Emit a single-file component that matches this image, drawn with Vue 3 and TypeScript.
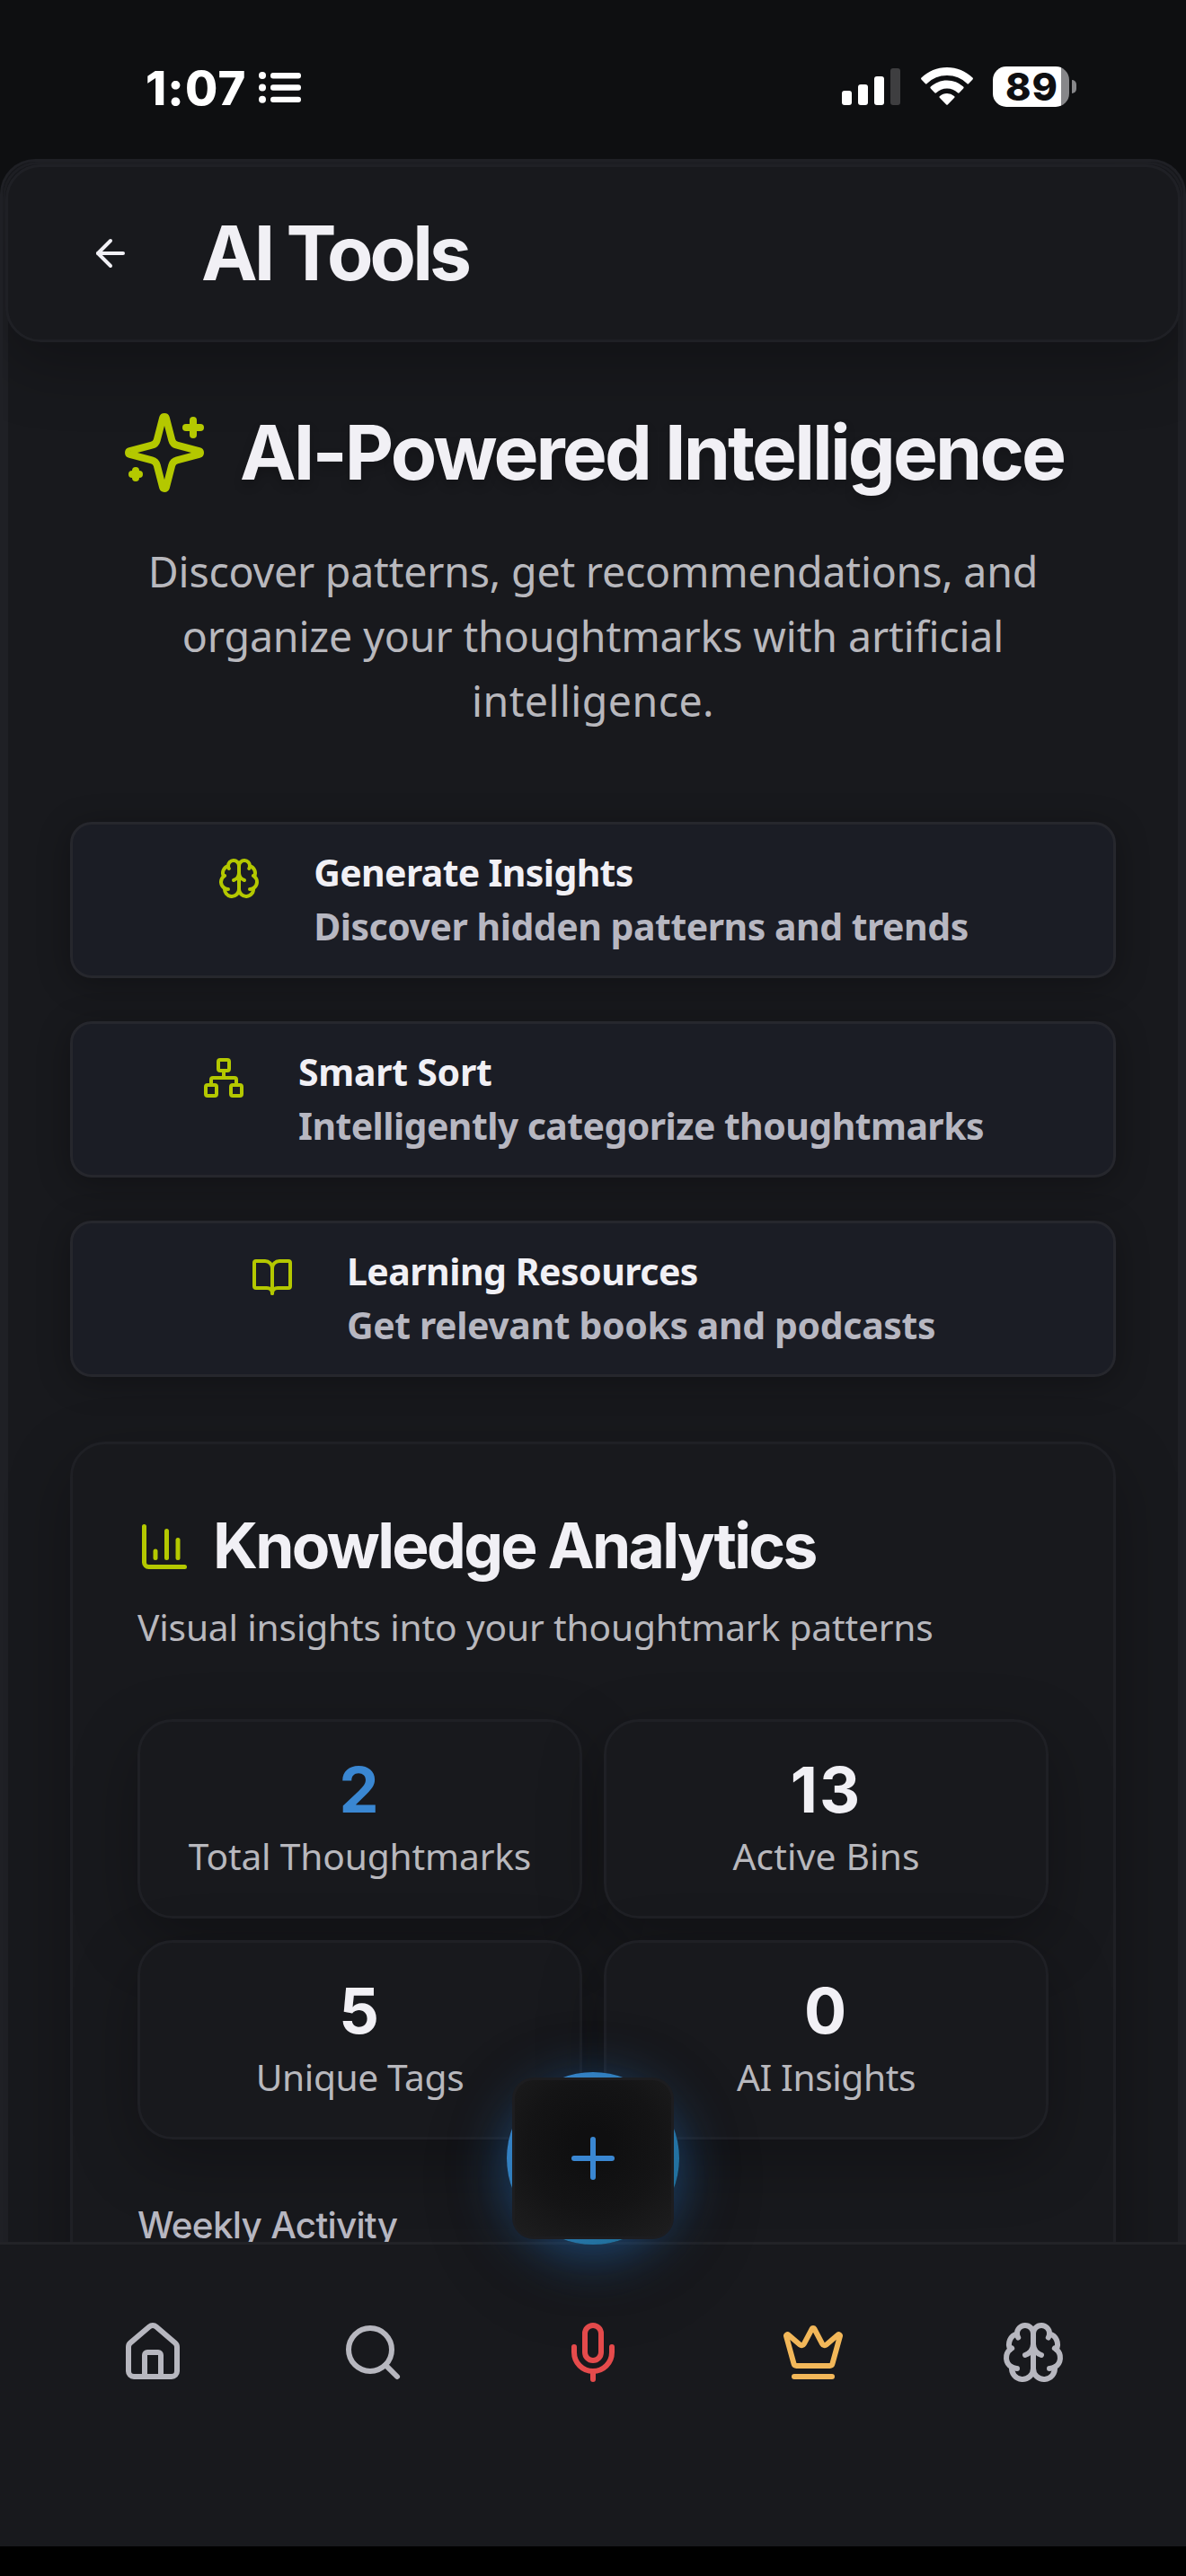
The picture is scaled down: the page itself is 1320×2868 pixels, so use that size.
<script setup lang="ts">
interface Action { id: string; title: string; desc: string; titleTracking: number; descTracking: number }
interface Stat { value: string; label: string; accent?: boolean; tracking: number }

const icons: Record<string, string> = {
  back: '<path d="m12 19-7-7 7-7"/><path d="M19 12H5"/>',
  sparkles:
    '<path d="M9.937 15.5A2 2 0 0 0 8.5 14.063l-6.135-1.582a.5.5 0 0 1 0-.962L8.5 9.936A2 2 0 0 0 9.937 8.5l1.582-6.135a.5.5 0 0 1 .963 0L14.063 8.5A2 2 0 0 0 15.5 9.937l6.135 1.581a.5.5 0 0 1 0 .964L15.5 14.063a2 2 0 0 0-1.437 1.437l-1.582 6.135a.5.5 0 0 1-.963 0z"/><path d="M20 3v4"/><path d="M22 5h-4"/><path d="M4 17v2"/><path d="M5 18H3"/>',
  brain:
    '<path d="M12 5a3 3 0 1 0-5.997.125 4 4 0 0 0-2.526 5.77 4 4 0 0 0 .556 6.588A4 4 0 1 0 12 18Z"/><path d="M12 5a3 3 0 1 1 5.997.125 4 4 0 0 1 2.526 5.77 4 4 0 0 1-.556 6.588A4 4 0 1 1 12 18Z"/><path d="M15 13a4.5 4.5 0 0 1-3-4 4.5 4.5 0 0 1-3 4"/><path d="M17.599 6.5a3 3 0 0 0 .399-1.375"/><path d="M6.003 5.125A3 3 0 0 0 6.401 6.5"/><path d="M3.477 10.896a4 4 0 0 1 .585-.396"/><path d="M19.938 10.5a4 4 0 0 1 .585.396"/><path d="M6 18a4 4 0 0 1-1.967-.516"/><path d="M19.967 17.484A4 4 0 0 1 18 18"/>',
  network:
    '<rect x="16" y="16" width="6" height="6" rx="1"/><rect x="2" y="16" width="6" height="6" rx="1"/><rect x="9" y="2" width="6" height="6" rx="1"/><path d="M5 16v-3a1 1 0 0 1 1-1h12a1 1 0 0 1 1 1v3"/><path d="M12 12V8"/>',
  book:
    '<path d="M12 7v14"/><path d="M3 18a1 1 0 0 1-1-1V4a1 1 0 0 1 1-1h5a4 4 0 0 1 4 4 4 4 0 0 1 4-4h5a1 1 0 0 1 1 1v13a1 1 0 0 1-1 1h-6a3 3 0 0 0-3 3 3 3 0 0 0-3-3z"/>',
  chart: '<path d="M3 3v16a2 2 0 0 0 2 2h16"/><path d="M18 17V9"/><path d="M13 17V5"/><path d="M8 17v-3"/>',
  plus: '<path d="M5 12h14"/><path d="M12 5v14"/>',
  home:
    '<path d="M15 21v-8a1 1 0 0 0-1-1h-4a1 1 0 0 0-1 1v8"/><path d="M3 10a2 2 0 0 1 .709-1.528l7-5.999a2 2 0 0 1 2.582 0l7 5.999A2 2 0 0 1 21 10v9a2 2 0 0 1-2 2H5a2 2 0 0 1-2-2z"/>',
  search: '<circle cx="11" cy="11" r="8"/><path d="m21 21-4.3-4.3"/>',
  mic: '<path d="M12 19v3"/><path d="M19 10v2a7 7 0 0 1-14 0v-2"/><rect x="9" y="2" width="6" height="13" rx="3"/>',
  crown:
    '<path d="M11.562 3.266a.5.5 0 0 1 .876 0L15.39 8.87a1 1 0 0 0 1.516.294L21.183 5.5a.5.5 0 0 1 .798.519l-2.834 10.246a1 1 0 0 1-.956.734H5.81a1 1 0 0 1-.957-.734L2.02 6.02a.5.5 0 0 1 .798-.519l4.276 3.664a1 1 0 0 0 1.516-.294z"/><path d="M5 21h14"/>',
}

const actions: Action[] = [
  { id: 'brain', title: 'Generate Insights', desc: 'Discover hidden patterns and trends', titleTracking: -0.66, descTracking: -0.49 },
  { id: 'network', title: 'Smart Sort', desc: 'Intelligently categorize thoughtmarks', titleTracking: -0.27, descTracking: -0.57 },
  { id: 'book', title: 'Learning Resources', desc: 'Get relevant books and podcasts', titleTracking: -0.52, descTracking: -0.39 },
]

const stats: Stat[] = [
  { value: '2', label: 'Total Thoughtmarks', accent: true, tracking: -0.16 },
  { value: '13', label: 'Active Bins', tracking: 0.15 },
  { value: '5', label: 'Unique Tags', tracking: -0.38 },
  { value: '0', label: 'AI Insights', tracking: -0.42 },
]

const tabs = ['home', 'search', 'mic', 'crown', 'brain']
const em = (px: number) => ({ letterSpacing: `${px}px` })
</script>

<template>
  <div class="screen">
    <div class="status">
      <div class="status-left">
        <span class="time">1:07</span>
        <svg class="list" width="47" height="36" viewBox="0 0 47 36" fill="#fff">
          <rect x="0" y="0" width="8" height="8" rx="4" /><rect x="13" y="1" width="34" height="6.4" rx="3" />
          <rect x="0" y="13.4" width="8" height="8" rx="4" /><rect x="13" y="14.3" width="34" height="6.4" rx="3" />
          <rect x="0" y="26.8" width="8" height="8" rx="4" /><rect x="13" y="27.7" width="34" height="6.4" rx="3" />
        </svg>
      </div>
      <div class="status-right">
        <svg width="65" height="41" viewBox="0 0 65 41" fill="#fff">
          <rect x="0" y="25" width="11" height="16" rx="3" /><rect x="18" y="18" width="11" height="23" rx="3" />
          <rect x="36" y="9" width="11" height="32" rx="3" /><rect x="54" y="0" width="11" height="41" rx="3" fill="#3e3e40" />
        </svg>
        <svg class="wifi" width="58" height="42" viewBox="0 0 58 42" fill="#fff">
          <path d="M29 0C18 0 8 4.300 .5 11.500a1.500 1.500 0 0 0 0 2l4.300 4.400a1.300 1.300 0 0 0 1.900 0A32 32 0 0 1 29 9a32 32 0 0 1 22.300 8.900 1.300 1.300 0 0 0 1.900 0l4.300-4.400a1.500 1.500 0 0 0 0-2C50 4.300 40 0 29 0z" />
          <path d="M29 14.500c-7 0-13.400 2.700-18.200 7.100a1.400 1.400 0 0 0 0 2l4.500 4.600a1.300 1.300 0 0 0 1.800 0A17.500 17.500 0 0 1 29 23.500c4.600 0 8.700 1.700 11.900 4.700a1.300 1.300 0 0 0 1.800 0l4.500-4.600a1.400 1.400 0 0 0 0-2A26.700 26.700 0 0 0 29 14.500z" />
          <path d="M29 29c-3 0-5.800 1.100-8 2.900a1.400 1.400 0 0 0 0 2.100l7 7.300a1.400 1.400 0 0 0 2 0l7-7.300a1.400 1.400 0 0 0 0-2.100A12.500 12.500 0 0 0 29 29z" />
        </svg>
        <div class="battery"><span>89</span></div>
        <div class="nub"></div>
      </div>
    </div>

    <div class="shell outer">
      <div class="shell middle">
        <div class="shell inner">
          <header class="header">
            <svg class="icon back" viewBox="0 0 24 24" v-html="icons.back"></svg>
            <h1 class="heading page-title">AI Tools</h1>
          </header>

          <main class="main">
            <div class="hero">
              <svg class="icon hero-icon" viewBox="0 0 24 24" v-html="icons.sparkles"></svg>
              <h2 class="heading hero-title">AI-Powered Intelligence</h2>
            </div>
            <p class="lead">
              <span :style="em(-0.21)">Discover patterns, get recommendations, and</span><br />
              <span :style="em(-0.12)">organize your thoughtmarks with artificial</span><br />
              <span :style="em(0.43)">intelligence.</span>
            </p>

            <div class="actions">
              <button v-for="a in actions" :key="a.id" class="action">
                <svg class="icon action-icon" viewBox="0 0 24 24" v-html="icons[a.id]"></svg>
                <span class="action-text">
                  <span class="action-title" :style="em(a.titleTracking)">{{ a.title }}</span>
                  <span class="action-desc" :style="em(a.descTracking)">{{ a.desc }}</span>
                </span>
              </button>
            </div>

            <section class="analytics">
              <div class="analytics-head">
                <svg class="icon chart-icon" viewBox="0 0 24 24" v-html="icons.chart"></svg>
                <h3 class="heading analytics-title">Knowledge Analytics</h3>
              </div>
              <p class="analytics-sub">Visual insights into your thoughtmark patterns</p>
              <div class="stats">
                <div v-for="s in stats" :key="s.label" class="stat">
                  <div class="stat-value" :class="{ accent: s.accent }">{{ s.value }}</div>
                  <div class="stat-label" :style="em(s.tracking)">{{ s.label }}</div>
                </div>
              </div>
              <h4 class="weekly">Weekly Activity</h4>
            </section>
          </main>
        </div>
      </div>
    </div>

    <nav class="nav">
      <a v-for="t in tabs" :key="t" class="tab" :class="t">
        <svg class="icon" viewBox="0 0 24 24" v-html="icons[t]"></svg>
      </a>
      <div class="fab">
        <button class="fab-button"><svg class="icon" viewBox="0 0 24 24" v-html="icons.plus"></svg></button>
      </div>
    </nav>
    <div class="bottom"></div>
  </div>
</template>

<style>
body { margin: 0; background: #000; }
</style>

<style scoped>
* { box-sizing: border-box; }
h1, h2, h3, h4, p { margin: 0; }
button { font: inherit; padding: 0; }

.screen {
  width: 1320px;
  height: 2868px;
  overflow: hidden;
  display: flex;
  flex-direction: column;
  background: #0e0f11;
  font-family: "Noto Sans", sans-serif;
}
.icon {
  display: block;
  flex: none;
  fill: none;
  stroke: currentColor;
  stroke-width: 2;
  stroke-linecap: round;
  stroke-linejoin: round;
}
.heading { font-family: Inter, sans-serif; font-weight: 700; color: #f1f0f5; white-space: nowrap; }

/* Status bar */
.status { height: 177px; flex: none; display: flex; justify-content: space-between; padding: 0 122px 0 162px; }
.status-left { display: flex; }
.time { width: 113px; font: 800 52.5px/60px Inter, sans-serif; letter-spacing: 1.2px; color: #fff; margin-top: 68px; }
.list { margin: 80px 0 0 13px; }
.status-right { display: flex; align-items: flex-start; padding-top: 74px; }
.status-right > svg:first-child { margin-top: 2px; }
.wifi { margin: 1px 0 0 23px; }
.battery {
  width: 85px;
  height: 45px;
  margin-left: 22px;
  border-radius: 15px;
  background: linear-gradient(90deg, #fff 76px, #87878a 76px);
  color: #0e0f11;
  font: 800 43px/45px Inter, sans-serif;
  letter-spacing: 1px;
  padding-left: 14px;
}
.nub { width: 5px; height: 15px; margin: 15px 0 0 3px; border-radius: 0 5px 5px 0; background: #87878a; }

/* Nested sheet */
.shell { display: flex; flex-direction: column; flex: 1; min-height: 0; border: 3px solid #1f2025; border-bottom: 0; border-radius: 39px 39px 0 0; background: #18191d; }
.shell.outer { overflow: hidden; }
.header {
  height: 198px;
  flex: none;
  margin: -3px -3px 0;
  border: 3px solid #1f2025;
  border-radius: 39px;
  background: #18191d;
  box-shadow: 0 24px 72px rgba(0, 0, 0, 0.28);
  display: flex;
  align-items: center;
  padding-left: 90px;
}
.back { width: 48px; height: 48px; color: #f1f0f5; }
.page-title { margin-left: 77px; font-size: 84px; line-height: 96px; letter-spacing: -3.93px; }

.main { padding: 0 69px; flex: none; }
.hero { display: flex; align-items: center; padding: 75px 0 0 57px; }
.hero-icon { width: 96px; height: 96px; color: #b4c800; }
.hero-title { margin-left: 36px; font-size: 84px; line-height: 96px; letter-spacing: -2.91px; text-shadow: 0 6px 12px rgba(0, 0, 0, 0.2); }
.lead { margin-top: 48px; text-align: center; font-size: 46.5px; line-height: 72px; color: #b8b8bd; white-space: nowrap; }

.actions { margin-top: 99px; display: flex; flex-direction: column; gap: 48px; }
.action {
  height: 174px;
  display: flex;
  align-items: flex-start;
  justify-content: center;
  gap: 59px;
  padding-top: 24px;
  border: 3px solid #26272d;
  border-radius: 24px;
  background: #1b1d25;
  box-shadow: 0 6px 36px rgba(0, 0, 0, 0.3);
  text-align: left;
}
.action-icon { width: 48px; height: 48px; margin-top: 12px; color: #b4c800; }
.action-text { display: flex; flex-direction: column; margin-top: -1px; font-weight: 700; font-size: 41px; line-height: 60px; white-space: nowrap; }
.action-title { color: #f1f0f5; }
.action-desc { color: #b7b7c1; }

.analytics {
  margin-top: 72px;
  height: 1300px;
  padding: 84px 72px 0;
  border: 3px solid #1f2025;
  border-radius: 39px;
  background: #18191d;
  box-shadow: 0 24px 72px rgba(0, 0, 0, 0.28);
}
.analytics-head { display: flex; align-items: center; }
.chart-icon { width: 60px; height: 60px; color: #b4c800; }
.analytics-title { margin: -2px 0 0 24px; font-size: 69.5px; line-height: 60px; letter-spacing: -2.7px; }
.analytics-sub { margin-top: 29px; font-size: 40.7px; line-height: 60px; letter-spacing: -0.17px; color: #b8b8bd; white-space: nowrap; }
.stats { margin-top: 73px; display: grid; grid-template-columns: 495px 495px; gap: 24px; }
.stat {
  height: 222px;
  padding-top: 40px;
  text-align: center;
  border: 3px solid #1f2025;
  border-radius: 39px;
  background: #18191d;
  box-shadow: 0 24px 72px rgba(0, 0, 0, 0.28);
}
.stat-value { font: 700 70px/72px Inter, sans-serif; letter-spacing: 2px; color: #f1f0f5; }
.stat-value.accent { color: #3a87d2; }
.stat-label { margin-top: 7px; font-size: 40.7px; line-height: 60px; color: #b8b8bd; }
.weekly { margin-top: 66px; font: 450 40.5px/60px Inter, sans-serif; letter-spacing: -0.75px; color: #b7b7c1; }

/* Bottom navigation */
.nav {
  position: relative;
  flex: none;
  height: 339px;
  display: flex;
  padding: 84px 48px 0;
  border-top: 3px solid #222327;
  background: #18191d;
}
.tab { flex: 1; display: flex; justify-content: center; color: #b7b7bf; height: 72px; }
.tab .icon { width: 72px; height: 72px; }
.tab.mic { color: #e54b4c; }
.tab.crown { color: #f2b759; }
.fab {
  position: absolute;
  left: 564px;
  top: -192px;
  width: 192px;
  height: 192px;
  border-radius: 50%;
  display: flex;
  align-items: center;
  justify-content: center;
  background: linear-gradient(135deg, #3a87d2, #1b6a90);
  box-shadow: 0 12px 60px rgba(40, 125, 215, 0.5), 0 24px 96px rgba(0, 0, 0, 0.25);
}
.fab-button {
  width: 180px;
  height: 180px;
  display: flex;
  align-items: center;
  justify-content: center;
  border: 3px solid #1d1d20;
  border-radius: 24px;
  background: radial-gradient(circle at 50% 42%, #0f0f10 15%, #141415 55%, #1e1e1f 100%);
  color: #3a87d2;
}
.fab-button .icon { width: 72px; height: 72px; }
.bottom { height: 33px; flex: none; background: #000; }
</style>
